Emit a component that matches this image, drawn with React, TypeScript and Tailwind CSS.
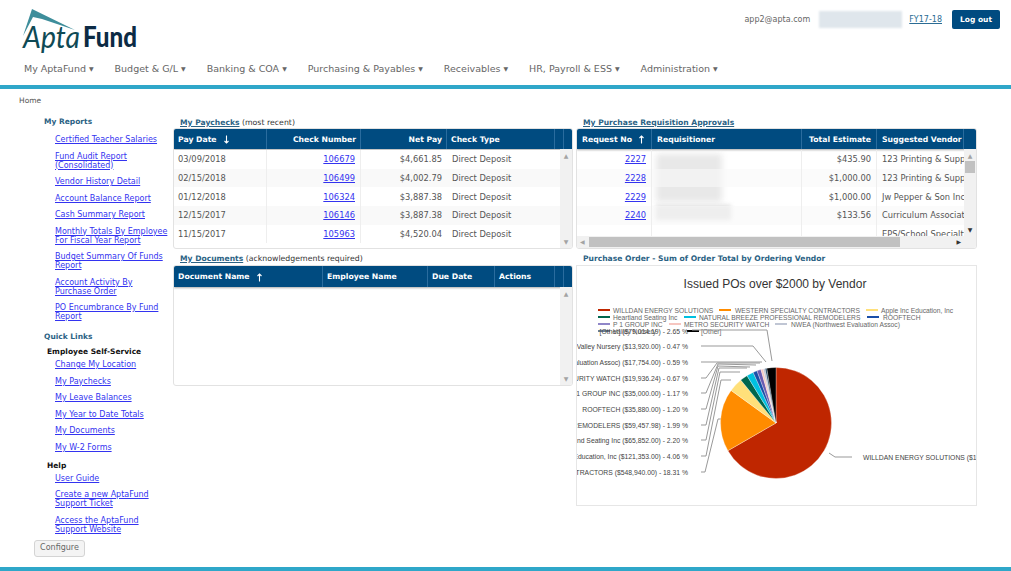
const navItems = ["My AptaFund", "Budget & G/L", "Banking & COA", "Purchasing & Payables", "Receivables", "HR, Payroll & ESS", "Administration"];

const reportLinks = [
  ["Certified Teacher Salaries"],
  ["Fund Audit Report", "(Consolidated)"],
  ["Vendor History Detail"],
  ["Account Balance Report"],
  ["Cash Summary Report"],
  ["Monthly Totals By Employee", "For Fiscal Year Report"],
  ["Budget Summary Of Funds", "Report"],
  ["Account Activity By", "Purchase Order"],
  ["PO Encumbrance By Fund", "Report"],
];
const essLinks = ["Change My Location", "My Paychecks", "My Leave Balances", "My Year to Date Totals", "My Documents", "My W-2 Forms"];
const helpLinks = [["User Guide"], ["Create a new AptaFund", "Support Ticket"], ["Access the AptaFund", "Support Website"]];

const paychecks = [
  ["03/09/2018", "106679", "$4,661.85"],
  ["02/15/2018", "106499", "$4,002.79"],
  ["01/12/2018", "106324", "$3,887.38"],
  ["12/15/2017", "106146", "$3,887.38"],
  ["11/15/2017", "105963", "$4,520.04"],
];
const requisitions = [
  ["2227", "$435.90", "123 Printing & Supply"],
  ["2228", "$1,000.00", "123 Printing & Supply"],
  ["2229", "$1,000.00", "Jw Pepper & Son Inc."],
  ["2240", "$133.56", "Curriculum Associates"],
  ["", "", "EPS/School Specialty"],
];

const slices = [
  { pct: 66.69, color: "#bf2600" },
  { pct: 18.31, color: "#ff8c00" },
  { pct: 4.06, color: "#ffe07a" },
  { pct: 2.2, color: "#00664d" },
  { pct: 1.99, color: "#00c0e0" },
  { pct: 1.2, color: "#1a4fa8" },
  { pct: 1.17, color: "#6a5ab0" },
  { pct: 0.67, color: "#f6c6c0" },
  { pct: 0.59, color: "#c0c6d4" },
  { pct: 0.47, color: "#123a5a" },
  { pct: 2.65, color: "#000000" },
];

const legend = [
  { y: 310, sw: 598, tx: 613, color: "#bf2600", label: "WILLDAN ENERGY SOLUTIONS" },
  { y: 310, sw: 719, tx: 735, color: "#ff8c00", label: "WESTERN SPECIALTY CONTRACTORS" },
  { y: 310, sw: 866, tx: 881, color: "#ffe07a", label: "Apple Inc Education, Inc" },
  { y: 317, sw: 598, tx: 613, color: "#00664d", label: "Heartland Seating Inc" },
  { y: 317, sw: 684, tx: 699, color: "#00c0e0", label: "NATURAL BREEZE PROFESSIONAL REMODELERS" },
  { y: 317, sw: 867, tx: 883, color: "#1a4fa8", label: "ROOFTECH" },
  { y: 324, sw: 598, tx: 613, color: "#8f86c8", label: "P 1 GROUP INC" },
  { y: 324, sw: 669, tx: 684, color: "#f6c6c0", label: "METRO SECURITY WATCH" },
  { y: 324, sw: 775, tx: 791, color: "#c0c6d4", label: "NWEA (Northwest Evaluation Assoc)" },
  { y: 331, sw: 598, tx: 613, color: "#6b7f96", label: "Valley Nursery" },
  { y: 331, sw: 687, tx: 701, color: "#000000", label: "[Other]" },
];

const pieLabels = [
  { y: 331, text: "[Other] ($79,014.19) - 2.65 %" },
  { y: 346, text: "Green Valley Nursery ($13,920.00) - 0.47 %" },
  { y: 362, text: "NWEA (Northwest Evaluation Assoc) ($17,754.00) - 0.59 %" },
  { y: 378, text: "METRO SECURITY WATCH ($19,936.24) - 0.67 %" },
  { y: 393, text: "P 1 GROUP INC ($35,000.00) - 1.17 %" },
  { y: 409, text: "ROOFTECH ($35,880.00) - 1.20 %" },
  { y: 425, text: "NATURAL BREEZE PROFESSIONAL REMODELERS ($59,457.98) - 1.99 %" },
  { y: 440, text: "Heartland Seating Inc ($65,852.00) - 2.20 %" },
  { y: 456, text: "Apple Inc Education, Inc ($121,353.00) - 4.06 %" },
  { y: 472, text: "WESTERN SPECIALTY CONTRACTORS ($548,940.00) - 18.31 %" },
];

const leaders = [
  "692,330 767,330 772,361",
  "701,346 753,346 766,362",
  "701,362 762,362",
  "701,378 706,378 717,363 760,363",
  "701,393 706,393 718,364 756,365",
  "701,409 706,409 718,366 750,367",
  "701,425 706,425 719,368 747,368",
  "701,440 706,440 720,372 740,372",
  "701,456 706,456 721,380 731,380",
  "701,472 705,472 718,419 721,419",
  "829,453 835,457 852,457",
];

function slicePaths() {
  const cx = 776;
  const cy = 423;
  const r = 55.5;
  let start = 0;
  return slices.map((s) => {
    const end = start + (s.pct / 100) * Math.PI * 2;
    const x1 = cx + r * Math.sin(start);
    const y1 = cy - r * Math.cos(start);
    const x2 = cx + r * Math.sin(end);
    const y2 = cy - r * Math.cos(end);
    const large = end - start > Math.PI ? 1 : 0;
    start = end;
    return { d: `M${cx},${cy} L${x1},${y1} A${r},${r} 0 ${large} 1 ${x2},${y2} Z`, color: s.color };
  });
}

function Caret() {
  return <span className="ml-[3px] text-[6px] leading-none">▼</span>;
}

function Logo() {
  return (
    <svg width="150" height="56" viewBox="0 0 150 56">
      <polygon points="32,9 75,30 42,19 33,17 23,36" fill="#3e8e9b" />
      <text x="23" y="48" fontFamily="Lato, sans-serif" fontStyle="italic" fontSize="30" textLength="57" lengthAdjust="spacingAndGlyphs" fill="#0f4a55">Apta</text>
      <text x="83" y="47" fontFamily="Lato, sans-serif" fontWeight="900" fontSize="29" textLength="54" lengthAdjust="spacingAndGlyphs" fill="#0c2b45">Fund</text>
    </svg>
  );
}

function SideLink({ lines }: { lines: string[] }) {
  return (
    <a href="#" className="block underline text-[#3333f0] text-[8px] leading-[9px] whitespace-nowrap">
      {lines.map((l) => (
        <span key={l} className="block">{l}</span>
      ))}
    </a>
  );
}

function Sidebar() {
  return (
    <aside className="w-[172px] shrink-0 flex flex-col pl-[44px] pt-[5px]">
      <h3 className="text-[7.5px] leading-[10px] font-bold text-[#2b6284]">My Reports</h3>
      <div className="flex flex-col gap-[7.5px] pl-[11px] mt-[8px]">
        {reportLinks.map((l) => (
          <SideLink key={l[0]} lines={l} />
        ))}
      </div>
      <h3 className="text-[7.5px] leading-[10px] font-bold text-[#2b6284] mt-[11px]">Quick Links</h3>
      <h4 className="text-[7.5px] leading-[10px] font-bold text-[#111] ml-[3px] mt-[5px]">Employee Self-Service</h4>
      <div className="flex flex-col gap-[7.5px] pl-[11px] mt-[3px]">
        {essLinks.map((l) => (
          <SideLink key={l} lines={[l]} />
        ))}
      </div>
      <h4 className="text-[7.5px] leading-[10px] font-bold text-[#111] ml-[3px] mt-[9px]">Help</h4>
      <div className="flex flex-col gap-[7.5px] pl-[11px] mt-[3px]">
        {helpLinks.map((l) => (
          <SideLink key={l[0]} lines={l} />
        ))}
      </div>
      <button className="self-start -ml-[10px] mt-[6px] w-[51px] h-[17px] rounded-[3px] border border-[#d4d4d4] bg-[#f4f4f4] text-[8px] leading-none text-[#666]">
        Configure
      </button>
    </aside>
  );
}

function HeadCell({ children, right, className = "px-[4px]" }: { children?: React.ReactNode; right?: boolean; className?: string }) {
  return (
    <div className={`flex items-center pt-[1px] border-r border-[#2a6c9e] whitespace-nowrap overflow-hidden ${right ? "justify-end" : ""} ${className}`}>
      {children}
    </div>
  );
}

function Arrow({ up }: { up?: boolean }) {
  return (
    <svg width="7" height="9" viewBox="0 0 7 9" className="ml-[6px] shrink-0" fill="none" stroke="#fff" strokeWidth="1.1">
      {up ? <path d="M3.5 8.5V1M1.5 3L3.5 1L5.5 3" /> : <path d="M3.5 0.5V8M1.5 6L3.5 8L5.5 6" />}
    </svg>
  );
}

function VScroll({ thumb }: { thumb?: boolean }) {
  return (
    <div className="w-[12px] shrink-0 bg-[#f1f1f1] flex flex-col items-center relative text-[6px] leading-none text-[#a3a3a3] pt-[4px]">
      <span>▲</span>
      {thumb && <div className="mt-[2px] w-[10px] h-[12px] bg-[#c1c1c1]" />}
      <span className={`mt-auto pb-[3px] ${thumb ? "text-[#333]" : ""}`}>▼</span>
    </div>
  );
}

function Paychecks() {
  return (
    <div className="h-[121px] border border-[#e2e2e2] rounded-[3px] flex flex-col overflow-hidden">
      <div className="grid grid-cols-[93px_94px_86px_108px_5px_1fr] h-[20px] shrink-0 bg-[#004b80] text-white font-bold text-[7.7px] shadow-[0_1px_2px_#aaa]">
        <HeadCell>Pay Date<Arrow /></HeadCell>
        <HeadCell right>Check Number</HeadCell>
        <HeadCell right>Net Pay</HeadCell>
        <HeadCell>Check Type</HeadCell>
        <HeadCell />
        <div />
      </div>
      <div className="flex flex-1 min-h-0">
        <div className="flex-1 min-w-0 pt-[1px]">
          {paychecks.map((r, i) => (
            <div key={r[1]} className={`grid grid-cols-[93px_94px_86px_1fr] h-[18.7px] items-center text-[8.3px] text-[#555] ${i % 2 ? "bg-[#f9f9f9]" : "bg-white"}`}>
              <div className="px-[4px] h-full flex items-center border-r border-[#eee]">{r[0]}</div>
              <div className="px-[5px] h-full flex items-center justify-end border-r border-[#eee]">
                <a href="#" className="underline text-[#3333f0]">{r[1]}</a>
              </div>
              <div className="px-[5px] h-full flex items-center justify-end">{r[2]}</div>
              <div className="px-[5px]">Direct Deposit</div>
            </div>
          ))}
        </div>
        <VScroll />
      </div>
    </div>
  );
}

function Requisitions() {
  return (
    <div className="h-[121px] border border-[#e2e2e2] rounded-[3px] flex flex-col overflow-hidden">
      <div className="grid grid-cols-[75px_150px_75px_87px_1fr] h-[20px] shrink-0 bg-[#004b80] text-white font-bold text-[7.7px] shadow-[0_1px_2px_#aaa]">
        <HeadCell className="px-[5px]">Request No<Arrow up /></HeadCell>
        <HeadCell className="px-[5px]">Requisitioner</HeadCell>
        <HeadCell right className="px-[5px]">Total Estimate</HeadCell>
        <HeadCell className="px-[5px]">Suggested Vendor</HeadCell>
        <div />
      </div>
      <div className="flex flex-1 min-h-0">
        <div className="flex-1 min-w-0 overflow-hidden relative pt-[1px]">
          <div className="absolute left-[79px] top-[5px] w-[66px] h-[48px] bg-[#e8e8e8] blur-[3px]" />
          <div className="absolute left-[79px] top-[56px] w-[75px] h-[15px] bg-[#dedede] blur-[2px]" />
          {requisitions.map((r, i) => (
            <div key={r[2] + i} className={`relative grid grid-cols-[75px_150px_75px_1fr] h-[18.7px] items-center text-[8.3px] text-[#555] ${i % 2 ? "bg-[#f9f9f9]/60" : ""}`}>
              <div className="px-[5px] h-full flex items-center justify-end border-r border-[#eee]">
                <a href="#" className="underline text-[#3333f0]">{r[0]}</a>
              </div>
              <div className="h-full border-r border-[#eee]" />
              <div className="px-[5px] h-full flex items-center justify-end border-r border-[#eee]">{r[1]}</div>
              <div className="pl-[5px] whitespace-nowrap overflow-hidden">{r[2]}</div>
            </div>
          ))}
        </div>
        <VScroll thumb />
      </div>
      <div className="h-[12px] shrink-0 bg-[#f1f1f1] flex items-center text-[6px] leading-none text-[#a3a3a3] pl-[3px] pr-[15px]">
        <span>◀</span>
        <div className="ml-[4px] w-[311px] h-[10px] bg-[#c1c1c1]" />
        <span className="ml-auto text-[#333]">▶</span>
      </div>
    </div>
  );
}

function Documents() {
  return (
    <div className="h-[121px] border border-[#e2e2e2] rounded-[3px] flex flex-col overflow-hidden">
      <div className="grid grid-cols-[149px_105px_67px_60px_5px_1fr] h-[21px] shrink-0 bg-[#004b80] text-white font-bold text-[7.7px] shadow-[0_1px_2px_#aaa]">
        <HeadCell>Document Name<Arrow up /></HeadCell>
        <HeadCell>Employee Name</HeadCell>
        <HeadCell>Due Date</HeadCell>
        <HeadCell>Actions</HeadCell>
        <HeadCell />
        <div />
      </div>
      <div className="flex flex-1 min-h-0 justify-end">
        <VScroll />
      </div>
    </div>
  );
}

function PieChart() {
  return (
    <div className="h-[241px] border border-[#e6e6e6] overflow-hidden">
      <svg viewBox="577 266 399 239" width="399" height="239" className="block" fontFamily="'Liberation Sans', sans-serif">
        <text x="775" y="288" textAnchor="middle" fontSize="12" fill="#333">Issued POs over $2000 by Vendor</text>
        {legend.map((l) => (
          <g key={l.label}>
            <rect x={l.sw} y={l.y - 1} width="12" height="2" fill={l.color} />
            <text x={l.tx} y={l.y + 2.5} fontSize="6.7" fill="#666">{l.label}</text>
          </g>
        ))}
        {leaders.map((p) => (
          <polyline key={p} points={p} fill="none" stroke="#999" strokeWidth="1" />
        ))}
        {pieLabels.map((l) => (
          <text key={l.y} x="688" y={l.y + 2.5} textAnchor="end" fontSize="6.8" fill="#444">{l.text}</text>
        ))}
        <text x="863" y="459.5" fontSize="6.8" fill="#444">WILLDAN ENERGY SOLUTIONS ($1,999,410.00) - 66.69 %</text>
        {slicePaths().map((s) => (
          <path key={s.color} d={s.d} fill={s.color} stroke="#fff" strokeWidth="0.3" />
        ))}
      </svg>
    </div>
  );
}

export default function App() {
  return (
    <div className="w-[1011px] h-[571px] overflow-hidden flex flex-col bg-white font-['DejaVu_Sans',sans-serif]">
      <header className="h-[85px] shrink-0 relative flex flex-col">
        <div className="flex items-start justify-between h-[56px]">
          <Logo />
          <div className="flex items-center mt-[10px] pr-[11px] h-[19px] text-[8px]">
            <span className="text-[#666]">app2@apta.com</span>
            <div className="ml-[9px] w-[83px] h-[17px] bg-[#dfe6ec] blur-[1px]" />
            <a href="#" className="ml-[7px] underline text-[#2b6c94]">FY17-18</a>
            <button className="ml-[10px] w-[48px] h-[19px] rounded-[2px] bg-[#004b80] text-white font-bold text-[7.5px]">Log out</button>
          </div>
        </div>
        <nav className="flex items-center gap-[21px] pl-[24px] h-[26px] text-[9.5px] text-[#666]">
          {navItems.map((n) => (
            <span key={n} className="flex items-center whitespace-nowrap">
              {n}
              <Caret />
            </span>
          ))}
        </nav>
      </header>
      <div className="h-[4px] shrink-0 bg-[#2fa7c9]" />
      <div className="h-[23px] shrink-0 pl-[19px] pt-[6px] text-[7.5px] leading-[11px] text-[#555]">Home</div>
      <main className="flex flex-1 min-h-0">
        <Sidebar />
        <div className="flex flex-1 pl-[1px] gap-[3px]">
          <section className="w-[400px] shrink-0">
            <div className="h-[16px] pl-[7px] pt-[6px] text-[7.8px] leading-[10px] text-[#333]">
              <a href="#" className="underline font-bold text-[7.6px] text-[#2b6284]">My Paychecks</a> (most recent)
            </div>
            <Paychecks />
            <div className="h-[16px] pl-[7px] pt-[5px] text-[7.8px] leading-[10px] text-[#333]">
              <a href="#" className="underline font-bold text-[7.6px] text-[#2b6284]">My Documents</a> (acknowledgements required)
            </div>
            <Documents />
          </section>
          <section className="w-[401px] shrink-0">
            <div className="h-[16px] pl-[7px] pt-[6px] text-[7.6px] leading-[10px]">
              <a href="#" className="underline font-bold text-[#2b6284]">My Purchase Requisition Approvals</a>
            </div>
            <Requisitions />
            <div className="h-[16px] pl-[7px] pt-[5px] text-[7.6px] leading-[10px] font-bold text-[#2b6284]">
              Purchase Order - Sum of Order Total by Ordering Vendor
            </div>
            <PieChart />
          </section>
        </div>
      </main>
      <div className="h-[4px] shrink-0 bg-[#2fa7c9]" />
    </div>
  );
}
